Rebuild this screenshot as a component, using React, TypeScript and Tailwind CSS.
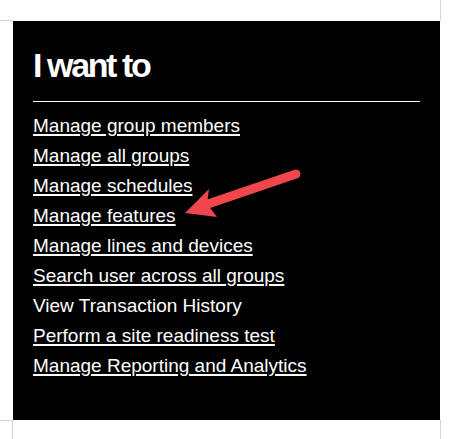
const links: { label: string; href?: boolean }[] = [
  { label: 'Manage group members', href: true },
  { label: 'Manage all groups', href: true },
  { label: 'Manage schedules', href: true },
  { label: 'Manage features', href: true },
  { label: 'Manage lines and devices', href: true },
  { label: 'Search user across all groups', href: true },
  { label: 'View Transaction History' },
  { label: 'Perform a site readiness test', href: true },
  { label: 'Manage Reporting and Analytics', href: true },
];

function Arrow() {
  return (
    <svg
      className="pointer-events-none absolute left-0 top-0"
      width="457"
      height="439"
      viewBox="0 0 457 439"
    >
      <line x1="296" y1="174" x2="208" y2="204" stroke="#f2464d" strokeWidth="9" strokeLinecap="round" />
      <polygon points="185,213 209,189 207,204 217,217" fill="#f2464d" />
    </svg>
  );
}

export default function App() {
  return (
    <div
      className="relative h-[439px] w-[457px] overflow-hidden bg-white"
      style={{ fontFamily: '"Liberation Sans", Arial, sans-serif' }}
    >
      <div className="grid grid-cols-[13px_427px_1fr] grid-rows-[21px_399px_1fr]">
        <div className="border-b border-[#d4d4d4]" />
        <div />
        <div className="border-l border-[#d4d4d4]" />

        <div />
        <div className="bg-black px-5 pt-6 text-white">
          <h2 className="text-[34px] font-bold leading-[40px] tracking-[-2.4px]">I want to</h2>
          <div className="mt-4 h-px bg-white" />
          <ul className="mt-[9px]">
            {links.map((l) => (
              <li key={l.label} className="text-[19px] leading-[30px]">
                {l.href ? (
                  <a href="#" className="underline decoration-[1.5px] underline-offset-2">
                    {l.label}
                  </a>
                ) : (
                  <span>{l.label}</span>
                )}
              </li>
            ))}
          </ul>
        </div>
        <div />

        <div className="h-[19px] border-r border-t border-[#d4d4d4]" />
        <div />
        <div className="border-l border-[#d4d4d4]" />
      </div>
      <Arrow />
    </div>
  );
}
